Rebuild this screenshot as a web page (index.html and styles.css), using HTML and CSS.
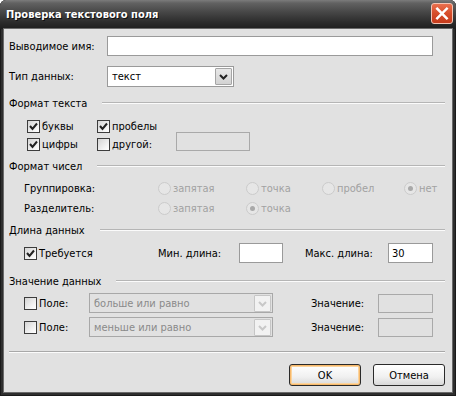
FILE: index.html
```html
<!DOCTYPE html>
<html lang="ru">
<head>
<meta charset="utf-8">
<title>Проверка текстового поля</title>
<link rel="stylesheet" href="styles.css">
</head>
<body>
<div class="window">
  <div class="titlebar">
    <span class="title">Проверка текстового поля</span>
    <span class="close">
      <svg width="21" height="21" viewBox="0 0 21 21"><path d="M5.5 5.5 L15.5 15.5 M15.5 5.5 L5.5 15.5" stroke="#fff" stroke-width="2.6" stroke-linecap="square"/></svg>
    </span>
  </div>
  <div class="content">
    <div class="row r-name">
      <span class="lbl w98">Выводимое имя:</span>
      <span class="input name-input"></span>
    </div>
    <div class="row r-type">
      <span class="lbl w98">Тип данных:</span>
      <span class="select type-select">
        <span class="sel-text">текст</span>
        <span class="sel-btn"><svg width="15" height="15" viewBox="0 0 15 15"><polyline points="4,6 7.5,9.5 11,6" fill="none" stroke="#222" stroke-width="2"/></svg></span>
      </span>
    </div>

    <div class="gtitle g1"><span>Формат текста</span><span class="gline"></span></div>
    <div class="chk-grid">
      <span class="item"><span class="cb"><svg width="11" height="11" viewBox="0 0 11 11"><polyline points="2,5 4.5,8 9,2.5" fill="none" stroke="#222" stroke-width="2"/></svg></span>буквы</span>
      <span class="item"><span class="cb"><svg width="11" height="11" viewBox="0 0 11 11"><polyline points="2,5 4.5,8 9,2.5" fill="none" stroke="#222" stroke-width="2"/></svg></span>пробелы</span>
      <span></span>
      <span class="item"><span class="cb"><svg width="11" height="11" viewBox="0 0 11 11"><polyline points="2,5 4.5,8 9,2.5" fill="none" stroke="#222" stroke-width="2"/></svg></span>цифры</span>
      <span class="item"><span class="cb"></span>другой:</span>
      <span class="input dis other-input"></span>
    </div>

    <div class="gtitle g2"><span>Формат чисел</span><span class="gline"></span></div>
    <div class="radio-row rr1">
      <span class="lbl">Группировка:</span>
      <span class="ritem"><span class="rb"></span>запятая</span>
      <span class="ritem"><span class="rb"></span>точка</span>
      <span class="ritem"><span class="rb"></span>пробел</span>
      <span class="ritem"><span class="rb on"></span>нет</span>
    </div>
    <div class="radio-row">
      <span class="lbl">Разделитель:</span>
      <span class="ritem"><span class="rb"></span>запятая</span>
      <span class="ritem"><span class="rb on"></span>точка</span>
    </div>

    <div class="gtitle g3"><span>Длина данных</span><span class="gline"></span></div>
    <div class="len-row">
      <span class="item"><span class="cb"><svg width="11" height="11" viewBox="0 0 11 11"><polyline points="2,5 4.5,8 9,2.5" fill="none" stroke="#222" stroke-width="2"/></svg></span>Требуется</span>
      <span class="lbl">Мин. длина:</span>
      <span class="input min-input"></span>
      <span class="lbl">Макс. длина:</span>
      <span class="input max-input">30</span>
    </div>

    <div class="gtitle g4"><span>Значение данных</span><span class="gline"></span></div>
    <div class="val-row vr1">
      <span class="item"><span class="cb"></span>Поле:</span>
      <span class="select dis val-select">
        <span class="sel-text">больше или равно</span>
        <span class="sel-btn"><svg width="15" height="15" viewBox="0 0 15 15"><polyline points="4,6 7.5,9.5 11,6" fill="none" stroke="#c8c8c8" stroke-width="2"/></svg></span>
      </span>
      <span class="lbl">Значение:</span>
      <span class="input dis val-input"></span>
    </div>
    <div class="val-row vr2">
      <span class="item"><span class="cb"></span>Поле:</span>
      <span class="select dis val-select">
        <span class="sel-text">меньше или равно</span>
        <span class="sel-btn"><svg width="15" height="15" viewBox="0 0 15 15"><polyline points="4,6 7.5,9.5 11,6" fill="none" stroke="#c8c8c8" stroke-width="2"/></svg></span>
      </span>
      <span class="lbl">Значение:</span>
      <span class="input dis val-input"></span>
    </div>

    <div class="sep"></div>
    <div class="buttons">
      <span class="btn default">OK</span>
      <span class="btn">Отмена</span>
    </div>
  </div>
</div>
</body>
</html>
```

FILE: styles.css
```css
* { box-sizing: border-box; }
html, body { margin: 0; padding: 0; }
body {
  width: 456px;
  height: 396px;
  background: #fff;
  font-family: "DejaVu Sans Condensed", "DejaVu Sans", sans-serif;
  font-stretch: condensed;
  font-size: 11px;
  color: #000;
}
.window {
  width: 456px;
  height: 396px;
  display: flex;
  flex-direction: column;
  background: #2e2e2e;
  border-radius: 6px 6px 0 0;
  overflow: hidden;
  box-shadow: inset 0 0 0 1px #1a1a1a;
}
.titlebar {
  height: 29px;
  flex: none;
  display: flex;
  align-items: center;
  justify-content: space-between;
  padding: 0 3px 0 6px;
  background: linear-gradient(#7c7c7c 0, #626262 3px, #474747 12px, #2c2c2c 22px, #1e1e1e 29px);
}
.title {
  color: #fff;
  font-weight: bold;
  font-size: 11px;
  text-shadow: 1px 1px 0 #111;
}
.close {
  width: 22px;
  height: 21px;
  margin-bottom: 3px;
  border: 1px solid #f3c3b3;
  border-radius: 3px;
  background: linear-gradient(#e9704e, #d64d2a 50%, #c63b1c);
  display: flex;
  align-items: center;
  justify-content: center;
}
.close svg { display: block; }
.content {
  flex: 1;
  margin: 0 4px 4px 4px;
  background: #e1e1e1;
  padding: 7px 7px 0 5px;
  box-shadow: 0 0 0 1px #6a6a6a;
}
.row { display: flex; align-items: center; }
.lbl { white-space: nowrap; }
.w98 { width: 98px; flex: none; }
.r-name { height: 20px; }
.r-type { height: 21px; margin-top: 10px; }
.input {
  display: inline-flex;
  align-items: center;
  background: #fff;
  border: 1px solid #9a9a9a;
  height: 20px;
  padding: 0 3px;
}
.input.dis { background: #e1e1e1; border-color: #a9a9a9; }
.name-input { width: 326px; }
.select {
  display: flex;
  align-items: center;
  height: 21px;
  border: 1px solid #9a9a9a;
  background: #fff;
  padding: 1px;
}
.type-select { width: 127px; }
.sel-text { flex: 1; padding-left: 3px; }
.sel-btn {
  width: 17px;
  height: 17px;
  border: 1px solid #a5a5a5;
  border-radius: 1px;
  background: linear-gradient(#e8e8e8, #d2d2d2);
  display: flex;
  align-items: center;
  justify-content: center;
}
.select.dis { background: #e1e1e1; border-color: #a8a8a8; color: #8a8a8a; }
.select.dis .sel-btn { background: #f2f2f2; border-color: #c6c6c6; }

.gtitle { display: flex; align-items: center; height: 14px; }
.gline {
  flex: 1;
  margin-left: 15px;
  border-top: 1px solid #b5b5b5;
  border-bottom: 1px solid #fbfbfb;
}
.g1 { margin-top: 9px; }
.g2 { margin-top: 6px; }
.g3 { margin-top: 5px; }
.g4 { margin-top: 11px; }

.item { display: flex; align-items: center; gap: 2px; white-space: nowrap; }
.cb {
  width: 13px;
  height: 13px;
  flex: none;
  border: 1px solid #3c3c3c;
  background: linear-gradient(135deg, #d4d4d4, #f4f4f4 70%, #fff);
  display: flex;
  align-items: center;
  justify-content: center;
}
.cb svg { display: block; }

.chk-grid {
  display: grid;
  grid-template-columns: 70px 79px 74px;
  grid-auto-rows: 18px;
  align-items: center;
  margin: 7px 0 0 18px;
}
.other-input { height: 19px; margin-bottom: 5px; }

.radio-row {
  display: grid;
  grid-template-columns: 134px 88px 76px 82px auto;
  height: 20px;
  align-items: center;
  padding-left: 15px;
}
.rr1 { margin-top: 5px; }
.ritem { display: flex; align-items: center; gap: 2px; color: #a2a2a2; }
.rb {
  width: 13px;
  height: 13px;
  border-radius: 50%;
  border: 1px solid #cbcbcb;
  background: #e6e6e6;
  display: flex;
  align-items: center;
  justify-content: center;
}
.rb.on::after {
  content: "";
  width: 5px;
  height: 5px;
  border-radius: 50%;
  background: #a9a9a9;
}

.len-row {
  display: grid;
  grid-template-columns: 134px 81px 66px 83px 45px;
  align-items: center;
  height: 20px;
  margin-top: 6px;
  padding-left: 15px;
}
.min-input { width: 44px; }
.max-input { width: 45px; }

.val-row {
  display: grid;
  grid-template-columns: 65px 184px 38px 67px 55px;
  align-items: center;
  height: 20px;
  padding-left: 15px;
}
.vr1 { margin-top: 5px; }
.vr2 { margin-top: 4px; }
.val-select { width: 184px; height: 20px; }
.val-row .lbl { grid-column: 4; }
.val-input { width: 55px; height: 19px; }

.sep {
  margin-top: 14px;
  border-top: 1px solid #a8a8a8;
  border-bottom: 1px solid #fbfbfb;
}
.buttons {
  display: flex;
  justify-content: flex-end;
  gap: 12px;
  margin-top: 11px;
}
.btn {
  width: 72px;
  height: 22px;
  border: 1px solid #2a2a2a;
  border-radius: 3px;
  background: linear-gradient(#ffffff, #f0f0f0 60%, #d8d8d8);
  display: flex;
  align-items: center;
  justify-content: center;
}
.btn.default {
  box-shadow: inset 0 0 0 1px #f7b96b, inset 0 0 0 2px #fbd49e;
}
```
